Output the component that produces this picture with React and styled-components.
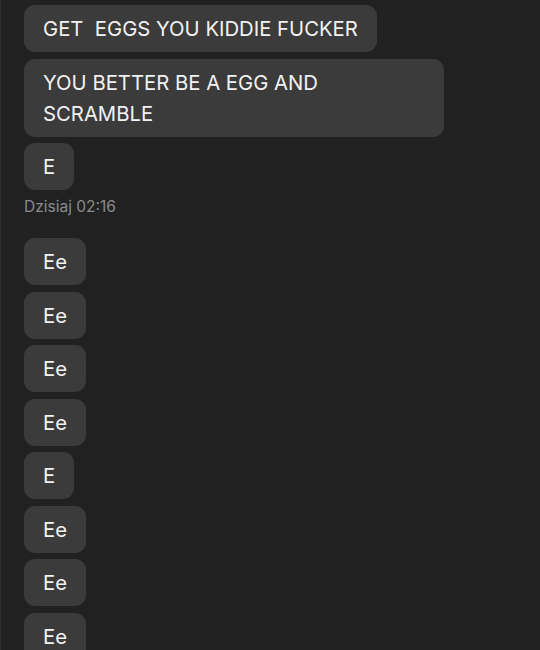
import React from "react";
import styled, { createGlobalStyle } from "styled-components";

const Styles = createGlobalStyle`
  html,
  body {
    margin: 0;
    background: #212121;
  }

  body {
    font-family: Inter, "Noto Sans", sans-serif;
  }
`;

const Thread = styled.div`
  box-sizing: border-box;
  display: flex;
  flex-direction: column;
  align-items: flex-start;
  gap: 6.5px;
  height: 650px;
  overflow: hidden;
  padding: 5px 24px 0;
  box-shadow: inset 1px 0 0 #2c2c2c;
  background: #212121;
`;

const Bubble = styled.div`
  box-sizing: border-box;
  max-width: 420px;
  padding: 8px 19px;
  border-radius: 11px;
  background: #3b3b3b;
  color: #f2f2f2;
  font-size: 20.3px;
  line-height: 31px;
  white-space: pre-wrap;
  flex-shrink: 0;
`;

const Stamp = styled.div`
  color: #8b8b8b;
  font-size: 15.5px;
  line-height: 20px;
  margin-bottom: 15px;
`;

const before = ["GET  EGGS YOU KIDDIE FUCKER", "YOU BETTER BE A EGG AND SCRAMBLE", "E"];
const after = ["Ee", "Ee", "Ee", "Ee", "E", "Ee", "Ee", "Ee"];

const App = () => (
  <>
    <Styles />
    <Thread>
      {before.map((text, i) => (
        <Bubble key={`b${i}`}>{text}</Bubble>
      ))}
      <Stamp>Dzisiaj 02:16</Stamp>
      {after.map((text, i) => (
        <Bubble key={`a${i}`}>{text}</Bubble>
      ))}
    </Thread>
  </>
);

export default App;
